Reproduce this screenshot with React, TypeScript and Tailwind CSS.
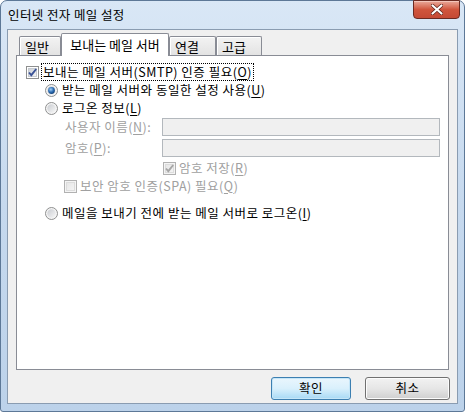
import React from 'react';

const font = "font-['Noto_Sans_CJK_KR','Malgun_Gothic',sans-serif]";

const CheckBox = ({ checked, disabled }: { checked?: boolean; disabled?: boolean }) => (
  <svg width="13" height="13" viewBox="0 0 13 13" className="shrink-0">
    <defs>
      <linearGradient id={disabled ? 'cbd' : 'cb'} x1="0" y1="0" x2="1" y2="1">
        <stop offset="0" stopColor={disabled ? '#e6e6e6' : '#cbcfd5'} />
        <stop offset="1" stopColor={disabled ? '#f4f4f4' : '#f6f6f6'} />
      </linearGradient>
    </defs>
    <rect x="0.5" y="0.5" width="12" height="12" fill={disabled ? '#f4f4f4' : '#ffffff'} stroke={disabled ? '#b1b1b1' : '#8e8f8f'} />
    <rect x="2.5" y="2.5" width="8" height="8" fill={`url(#${disabled ? 'cbd' : 'cb'})`} stroke={disabled ? '#dcdcdc' : '#c6cad0'} />
    {checked && (
      <path d="M3 6.5 L5.3 9.2 L10.2 3" fill="none" stroke={disabled ? '#a6a6a6' : '#3a5296'} strokeWidth="1.9" />
    )}
  </svg>
);

const Radio = ({ checked }: { checked?: boolean }) => (
  <svg width="13" height="13" viewBox="0 0 13 13" className="shrink-0">
    <defs>
      <linearGradient id="rg" x1="0" y1="0" x2="1" y2="1">
        <stop offset="0" stopColor="#c9ccd1" />
        <stop offset="1" stopColor="#f7f7f7" />
      </linearGradient>
      <radialGradient id="rs" cx="0.4" cy="0.35" r="0.7">
        <stop offset="0" stopColor="#a4d0f5" />
        <stop offset="0.55" stopColor="#2f6fb5" />
        <stop offset="1" stopColor="#0f3c72" />
      </radialGradient>
    </defs>
    <circle cx="6.5" cy="6.5" r="6" fill="#f4f4f4" stroke="#8e8f8f" />
    <circle cx="6.5" cy="6.5" r="4.2" fill="url(#rg)" />
    {checked && <circle cx="6.5" cy="6.5" r="3.4" fill="url(#rs)" />}
  </svg>
);

const U = ({ children }: { children: React.ReactNode }) => <span className="underline underline-offset-2">{children}</span>;

const Tab = ({ label, active, w }: { label: string; active?: boolean; w: string }) =>
  active ? (
    <div className={`${w} h-[23px] -mb-px relative z-10 bg-white border border-b-0 border-[#898c95] rounded-t-[2px] flex items-center justify-center text-[13px] pb-[2px]`}>
      {label}
    </div>
  ) : (
    <div className={`${w} h-[19px] bg-gradient-to-b from-[#f3f3f3] to-[#e3e3e3] border border-b-0 border-[#898c95] rounded-t-[2px] shadow-[inset_1px_1px_0_#ffffff] flex items-center pl-[5px] text-[13px] pt-[1px]`}>
      {label}
    </div>
  );

const Row = ({ children, className = '' }: { children: React.ReactNode; className?: string }) => (
  <div className={`h-[18px] flex items-center ${className}`}>{children}</div>
);

export default function App() {
  return (
    <div className={`w-[465px] h-[412px] bg-white ${font} text-[12.5px] tracking-[0.5px] text-black leading-none`}>
      <div className="w-full h-full rounded-t-[7px] rounded-b-[3px] border border-[#5d7897] bg-gradient-to-b from-[#d9e7f6] via-[#c6d9ee] to-[#bcd2ea] flex flex-col">
        <div className="h-[28px] flex justify-between items-start pl-[7px] pr-[4px] shrink-0">
          <span className="mt-[8px] text-[12.5px] tracking-[0.4px] text-black">인터넷 전자 메일 설정</span>
          <div className="w-[47px] h-[19px] -mt-px rounded-b-[4px] border border-[#6b2a22] bg-gradient-to-b from-[#e9a99b] via-[#d0553d] to-[#c54a35] shadow-[inset_0_1px_0_#f3c5ba] flex items-center justify-center">
            <svg width="12" height="11" viewBox="0 0 12 11">
              <path d="M1.5 1.5 L10.5 9.5 M10.5 1.5 L1.5 9.5" stroke="#5a2018" strokeWidth="3.6" strokeLinecap="round" />
              <path d="M1.5 1.5 L10.5 9.5 M10.5 1.5 L1.5 9.5" stroke="#ffffff" strokeWidth="2.2" strokeLinecap="round" />
            </svg>
          </div>
        </div>
        <div className="flex-1 mx-[6px] border border-[#8a9cb1] bg-[#f0f0f0] flex flex-col pl-[8px] pr-[7px] pt-[3px]">
          <div className="h-[22px] flex items-end pl-[3px] tracking-normal">
            <Tab label="일반" w="w-[42px]" />
            <Tab label="보내는 메일 서버" active w="w-[108px]" />
            <Tab label="연결" w="w-[47px]" />
            <Tab label="고급" w="w-[46px]" />
          </div>
          <div className="w-[433px] h-[315px] bg-white border border-[#898c95] pt-[7px] pl-[9px] pr-[8px] flex flex-col">
            <Row>
              <CheckBox checked />
              <span className="ml-[2px] px-px py-[2px] border border-dotted border-black">
                보내는 메일 서버(SMTP) 인증 필요(<U>O</U>)
              </span>
            </Row>
            <Row className="pl-[19px]">
              <Radio checked />
              <span className="ml-[4px]">
                받는 메일 서버와 동일한 설정 사용(<U>U</U>)
              </span>
            </Row>
            <Row className="pl-[19px]">
              <Radio />
              <span className="ml-[4px]">
                로그온 정보(<U>L</U>)
              </span>
            </Row>
            <div className="h-[18px] mt-px flex items-center text-[#a0a0a0]">
              <span className="w-[136px] pl-[39px]">
                사용자 이름(<U>N</U>):
              </span>
              <div className="flex-1 h-[18px] bg-[#f0f0f0] border border-[#b3b8bd]" />
            </div>
            <div className="h-[18px] mt-[3px] flex items-center text-[#a0a0a0]">
              <span className="w-[136px] pl-[39px]">
                암호(<U>P</U>):
              </span>
              <div className="flex-1 h-[18px] bg-[#f0f0f0] border border-[#b3b8bd]" />
            </div>
            <Row className="mt-[2px] pl-[137px] text-[#a0a0a0]">
              <CheckBox checked disabled />
              <span className="ml-[3px]">
                암호 저장(<U>R</U>)
              </span>
            </Row>
            <Row className="pl-[38px] text-[#a0a0a0]">
              <CheckBox disabled />
              <span className="ml-[3px]">
                보안 암호 인증(SPA) 필요(<U>Q</U>)
              </span>
            </Row>
            <Row className="mt-[9px] pl-[19px]">
              <Radio />
              <span className="ml-[4px]">
                메일을 보내기 전에 받는 메일 서버로 로그온(<U>I</U>)
              </span>
            </Row>
          </div>
          <div className="mt-[7px] flex justify-end">
            <button className="w-[80px] h-[23px] rounded-[3px] border border-[#3c7fb1] bg-gradient-to-b from-[#eaf6fd] via-[#d9f0fc] to-[#a7d9f5] shadow-[inset_0_0_0_1px_#c5e6f8] text-[12.5px] tracking-[0.5px]">
              확인
            </button>
            <button className="ml-[14px] w-[85px] h-[23px] rounded-[3px] border border-[#707070] bg-gradient-to-b from-[#f2f2f2] via-[#e6e6e6] to-[#cfcfcf] shadow-[inset_0_0_0_1px_#fcfcfc] text-[12.5px] tracking-[0.5px]">
              취소
            </button>
          </div>
        </div>
        <div className="h-[7px] shrink-0" />
      </div>
    </div>
  );
}
